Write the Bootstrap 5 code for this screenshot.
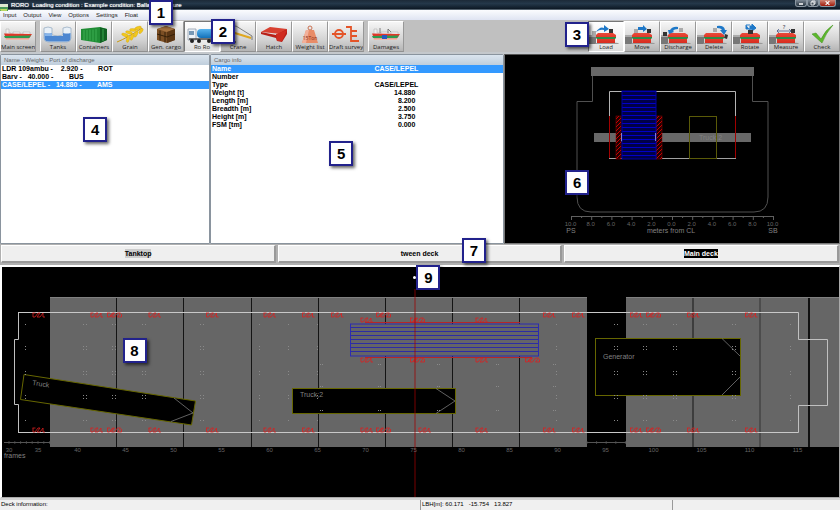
<!DOCTYPE html>
<html lang="en">
<head>
<meta charset="utf-8">
<meta name="viewport" content="width=device-width, initial-scale=1">
<title>RORO Loading condition</title>
<link href="https://cdn.jsdelivr.net/npm/bootstrap@5.3.0/dist/css/bootstrap.min.css" rel="stylesheet">
<style>
body{font-family:"Liberation Sans",Arial,sans-serif;font-size:7px;line-height:8px;background:#c0c0c0;color:#000}
.app-title{height:10px;font-size:6px;line-height:10px;color:#fff;background:linear-gradient(#1c2a38,#24384a 40%,#0c1824);border-bottom:1px solid #53616d}
.app-title svg{width:8px;height:8px}
.title-start{width:137px;padding-left:3px;text-shadow:0 0 1px #fff}
.title-end{margin-left:28px;text-shadow:0 0 1px #fff}
.win-btn{border:1px solid #8b97a2;border-top:0;border-radius:0 0 3px 3px;height:7px;width:12px;background:linear-gradient(#7a8692,#273440)}
.win-btn svg{display:block;width:100%;height:6px}
.win-close{width:17px;background:linear-gradient(#d08878,#a01808)}
.app-menu{height:10px;gap:7px;padding-left:3px;font-size:6px;line-height:10px;background:linear-gradient(#fbfcfe,#dfe4f2)}
.app-menu a{color:#222;text-decoration:none}
.toolbar{height:32px;padding-top:1px;background:#c0c0c0}
.tool{width:36px;height:31px;padding:1px 0 0;border:1px solid;border-color:#fff #989898 #909090 #fff;background:linear-gradient(#f6f6f6,#d4d4d4 60%,#b4b4b4);font-family:"Open Sans","Noto Sans",sans-serif;font-size:6px;line-height:7px;color:#1c1c1c;text-align:center;white-space:nowrap;overflow:hidden}
.tool svg{display:block;width:34px;height:20px}
.tool.on{background:linear-gradient(#fff,#eee 60%,#ddd);border-color:#777 #fff #fff #777}
.work{padding-top:2px;background:#c4c8cc}
.pane{background:#fff;border:1px solid #8a949e;border-radius:2px 2px 0 0}
.w-list{width:25%}.w-info{width:35%}.w-hull{width:40%}
.pane-head{height:10px;padding-left:3px;font-size:6px;line-height:10px;color:#666;background:linear-gradient(#dbe5ef,#bfcedc)}
.cargo-row{display:block;width:100%;border:0;padding:0 0 0 1px;background:none;text-align:left;white-space:pre;font-weight:700;line-height:8px}
.picked,.picked td,.picked th{background:#39f;color:#fff}
.facts{width:100%;font-weight:700}
.facts th{padding:0 0 0 1px;line-height:8px}
.facts td{padding:0 30% 0 0;text-align:right;line-height:8px}
.facts .name-cell{padding-right:29%}
.scene{display:block;width:100%;height:auto;background:#000}
.hull-pane{border:1px solid #777;border-top-color:#555;background:#000}
.decks{gap:2px;padding:1px 1px 2px;background:#b0b0b0}
.deck-btn{flex:1 1 0;height:18px;border:1px solid;border-width:1px 2px 2px 1px;border-color:#fff #999 #999 #fff;background:#efefef;padding:0;font-weight:700;line-height:8px;color:#000}
.deck-mid{flex-grow:1.03}
.deck-btn span{padding:1px 0}
.deck-btn .dim{background:#ccc}
.deck-btn .cur{background:#000;color:#fff}
.deck-pane{border:solid #fff;border-width:2px 1px 1px 2px;border-right-color:#aaa;border-bottom-color:#aaa}
.statusbar{font-size:6px;line-height:9px;background:#f0f0f0;border-top:2px solid #d4d4d4}
.statusbar div{padding-left:1px;height:10px;white-space:pre}
.statusbar div+div{border-left:1px solid #999}
.st-a{width:50%}.st-b{width:30%}.st-c{width:20%}
.callout{position:absolute;width:24px;height:25px;border:2px solid #22228c;background:#fff;box-shadow:2px 2px 3px rgba(0,0,0,.6);font-size:15px;line-height:21px;font-weight:700;text-align:center;color:#000;z-index:5}
.c1{left:149px;top:0}.c2{left:211px;top:19px}.c3{right:251px;top:22px}
.c4{left:39.5%;top:33%}.c5{left:40.5%;top:46%}.c6{left:18%;top:61%}
.c7{left:55%;top:-6px}.c8{left:14.4%;top:31%}.c9{left:49.5%;top:-2px}
.scene text{font-family:"Liberation Sans",Arial,sans-serif}
.t7{font-size:7px;fill:#808080}.t6{font-size:6px;fill:#666}
</style>
<script src="https://cdn.jsdelivr.net/npm/bootstrap@5.3.0/dist/js/bootstrap.bundle.min.js"></script>
</head>
<body class="position-relative">
<svg width="0" height="0" class="position-absolute" aria-hidden="true">
<defs>
<linearGradient id="gBlue" x1="0" y1="0" x2="0" y2="1"><stop offset="0" stop-color="#58b4ee"/><stop offset="1" stop-color="#1270b8"/></linearGradient>
<linearGradient id="gShip" x1="0" y1="0" x2="0" y2="1"><stop offset="0" stop-color="#e84a3a"/><stop offset=".4" stop-color="#e03828"/><stop offset=".45" stop-color="#2c8c48"/><stop offset=".6" stop-color="#2c8c48"/><stop offset=".65" stop-color="#e03828"/><stop offset="1" stop-color="#d82c20"/></linearGradient>
<symbol id="quay" viewBox="0 0 34 20"><path d="M0 11h7v9H0z" fill="#777"/><path d="M0 11h7v2H0z" fill="#aaa"/><ellipse cx="18" cy="19.500" rx="12" ry="1" fill="#999"/><path d="M9 9h15l3 2v3l-1 1v4H8v-4l-1-1v-3z" fill="url(#gShip)"/></symbol>
<symbol id="ship" viewBox="0 0 34 20"><path d="M5 11V5h3v4h2v2zM12 11V8h7v3zM22 11V8h7v3z" fill="#eee" stroke="#aaa" stroke-width=".5"/><path d="M3 9.500l28 .5-3 4.500H5z" fill="#e03828"/><path d="M3 12l27-.5-2 2.500H4z" fill="#2c9c50"/><path d="M4 14.500h24v1.500H5z" fill="#f0b8a8"/></symbol>
<pattern id="bluebars" width="4" height="4" patternUnits="userSpaceOnUse"><rect width="4" height="4" fill="#000048"/><rect width="4" height="1" y="3" fill="#0000c8"/></pattern>
<pattern id="redhatch" width="4" height="4" patternUnits="userSpaceOnUse"><rect width="4" height="4" fill="#200"/><path d="M-1 4L4-1M1 6L6 1" stroke="#c80000" stroke-width="1"/></pattern>
</defs>
</svg>

<header class="app-title d-flex align-items-start">
<svg viewBox="0 0 8 8" class="mt-1"><path d="M0 0h8v4H0z" fill="#dfe9d0"/><path d="M0 3h8v4H0z" fill="#4a9a58"/><path d="M0 5h7v2H1z" fill="#b8d860"/></svg>
<span class="title-start text-nowrap">RORO&nbsp; Loading condition : Example condition: Balla</span>
<span class="title-end flex-grow-1">ure</span>
<div class="d-flex pe-1">
<button class="win-btn p-0" type="button" aria-label="Minimize"><svg viewBox="0 0 10 6"><path d="M3 4h4" stroke="#fff" stroke-width="1.500"/></svg></button>
<button class="win-btn p-0" type="button" aria-label="Restore"><svg viewBox="0 0 10 6"><path d="M4 2V1h3v3H6M3 2h3v3H3z" stroke="#fff" fill="none" stroke-width=".8"/></svg></button>
<button class="win-btn win-close p-0" type="button" aria-label="Close"><svg viewBox="0 0 16 6"><path d="M6 1l4 4M10 1L6 5" stroke="#fff" stroke-width="1.200"/></svg></button>
</div>
</header>
<nav class="app-menu d-flex"><a href="#">Input</a><a href="#">Output</a><a href="#">View</a><a href="#">Options</a><a href="#">Settings</a><a href="#">Float</a></nav>

<div class="toolbar d-flex" role="toolbar" aria-label="Main tools">
<button class="tool" type="button"><svg viewBox="0 0 34 20"><use href="#ship"/></svg>Main screen</button>
<button class="tool ms-1" type="button"><svg viewBox="0 0 34 20"><path d="M3 4q4-2 8 0v7q6 2 11 0V4q4-2 8 0v10q0 4-4 4H7q-4 0-4-4z" fill="#e8f0f8" stroke="#8fa6bd" stroke-width=".7"/><path d="M3.500 9q4 1 7.500 0v3h11V9q4 1 7.500 0v5q0 3.500-4 3.500H8q-4.500 0-4.500-3.500z" fill="#4c86d0"/><path d="M4 9q4 2 7 0v3H4z" fill="#86b4ea"/></svg>Tanks</button>
<button class="tool" type="button"><svg viewBox="0 0 34 20"><path d="M4 5l19-2 7 2v11l-7 3-19-3z" fill="#1f8c34"/><path d="M23 3.500l7 1.500v11l-7 3z" fill="#116022"/><path d="M7 6v10M10 6v10.500M13 5.500v11M16 5.500v12M19 5v12.500M26 5v12" stroke="#45b85a" stroke-width=".8"/></svg>Containers</button>
<button class="tool" type="button"><svg viewBox="0 0 34 20"><path d="M4 18Q14 14 29 4" stroke="#c99a10" fill="none"/><g fill="#f2c81c" stroke="#c99a10" stroke-width=".3"><ellipse cx="12" cy="11" rx="3.500" ry="1.500" transform="rotate(20 12 11)"/><ellipse cx="16" cy="8.500" rx="3.500" ry="1.500" transform="rotate(15 16 8.500)"/><ellipse cx="20" cy="6" rx="3.500" ry="1.500" transform="rotate(5 20 6)"/><ellipse cx="25" cy="4" rx="3.500" ry="1.500" transform="rotate(-20 25 4)"/><ellipse cx="15" cy="15" rx="3.500" ry="1.500" transform="rotate(-75 15 15)"/><ellipse cx="19" cy="13" rx="3.500" ry="1.500" transform="rotate(-70 19 13)"/><ellipse cx="23" cy="10" rx="3.500" ry="1.500" transform="rotate(-65 23 10)"/><ellipse cx="28" cy="7" rx="3" ry="1.500" transform="rotate(-55 28 7)"/></g></svg>Grain</button>
<button class="tool" type="button"><svg viewBox="0 0 34 20"><path d="M8 5l9-3 9 3v11l-8 3-10-3z" fill="#7c4f24"/><path d="M8 5l9-3 9 3-8 3z" fill="#a87440"/><path d="M18 8l8-3v11l-8 3z" fill="#5a3614"/><path d="M11 6.500v10M16 8v10.500M8 10l10 3 8-3" stroke="#352008" fill="none"/></svg>Gen. cargo</button>
<button class="tool on" type="button"><svg viewBox="0 0 34 20"><path d="M3 5h8v11H3z" fill="#eef2f6" stroke="#8494a4" stroke-width=".7"/><path d="M4 7h5v4H4z" fill="#7898b4"/><rect x="12" y="5" width="20" height="9" rx="4" fill="url(#gBlue)"/><path d="M4 15h28" stroke="#444" stroke-width="1.500"/><g fill="#222"><circle cx="7" cy="17" r="2"/><circle cx="14" cy="17" r="2"/><circle cx="24" cy="17" r="2"/><circle cx="29" cy="17" r="2"/></g></svg>Ro Ro</button>
<button class="tool" type="button"><svg viewBox="0 0 34 20"><path d="M4 6L30 14" stroke="#e0a820" stroke-width="2"/><path d="M3 5l12-3 16 10v4" stroke="#555" fill="none" stroke-width=".7"/><path d="M10 8v9M7 18h8" stroke="#777" stroke-width="2"/></svg>Crane</button>
<button class="tool" type="button"><svg viewBox="0 0 34 20"><path d="M4 8l9-5 17 2-5 5z" fill="#d84030"/><path d="M4 8l15 3 11-6v5l-5 8-5-1-1-3-15-4z" fill="#b82018"/><path d="M19 10l11-4-5 11-5 0z" fill="#d02c20"/></svg>Hatch</button>
<button class="tool" type="button"><svg viewBox="0 0 34 20"><circle cx="17" cy="4" r="2" fill="none" stroke="#c87050"/><path d="M13 6h8l4 13H9z" fill="#e88c68"/><path d="M13 6h3l-3 13H9z" fill="#f2b09a"/><text x="17" y="16" font-size="5" text-anchor="middle" fill="#8c3018">15Ton</text></svg>Weight list</button>
<button class="tool" type="button"><svg viewBox="0 0 34 20"><g stroke="#e45428" fill="none" stroke-width="1.800"><circle cx="10" cy="10" r="4"/><path d="M3 10h14M17 3h5v14h8M22 7h6M22 12h6"/></g></svg>Draft survey</button>
<button class="tool ms-1" type="button"><svg viewBox="0 0 34 20"><use href="#ship"/><path d="M11 9V4M19 9V5l3 3" stroke="#666" fill="none" stroke-width=".8"/><path d="M13 11h5v4h-5z" fill="#2858c0"/></svg>Damages</button>
<div class="d-flex ms-auto">
<button class="tool on" type="button"><svg viewBox="0 0 34 20"><use href="#quay"/><path d="M7 8q4-6 8-4V1l5 4-5 3V6q-4-1-8 2z" fill="#1e78c8"/><path d="M3 7h4v4H3z" fill="#aaa"/><path d="M20 5h4v4h-4z" fill="#333"/></svg>Load</button>
<button class="tool" type="button"><svg viewBox="0 0 34 20"><use href="#quay"/><path d="M13 3h5V1l4 4-4 3V6h-5z" fill="#1e78c8"/><path d="M9 5h4v4H9z" fill="#aaa"/><path d="M22 5h4v4h-4z" fill="#333"/></svg>Move</button>
<button class="tool" type="button"><svg viewBox="0 0 34 20"><use href="#quay"/><path d="M17 3q-5-1-8 3H7l1 4 5-2-1-1q1-2 5-2z" fill="#1e78c8"/><path d="M2 8h4v4H2z" fill="#333"/><path d="M18 4h4v4h-4z" fill="#aaa"/></svg>Discharge</button>
<button class="tool" type="button"><svg viewBox="0 0 34 20"><use href="#quay"/><path d="M20 2q7-1 8 4h2l-3 5-4-5h2q-1-2-5-2z" fill="#1e78c8"/><path d="M16 4h4v4h-4z" fill="#aaa"/><path d="M28 10l3 1-1 4-3-1z" fill="#333"/></svg>Delete</button>
<button class="tool" type="button"><svg viewBox="0 0 34 20"><use href="#quay"/><path d="M13 1v4h6v2l4-3-4-4v2h-2v4M13 1h4" fill="#1e78c8" stroke="#1e78c8"/><path d="M15 6h5v4h-5z" fill="#333"/></svg>Rotate</button>
<button class="tool" type="button"><svg viewBox="0 0 34 20"><use href="#quay"/><path d="M8 7h14M10 5L8 7l2 2M20 5l2 2-2 2" stroke="#334a80" fill="none" stroke-width=".7"/><text x="15" y="5" font-size="6" text-anchor="middle" fill="#223">?</text><path d="M22 5h4v4h-4z" fill="#333"/></svg>Measure</button>
<button class="tool" type="button"><svg viewBox="0 0 34 20"><path d="M7 10l4-1 5 6Q21 5 28 1q-7 8-11 18z" fill="#5cb82c" stroke="#3c8c18" stroke-width=".5"/></svg>Check</button>
</div>
</div>

<main>
<div class="work d-flex">
<section class="pane w-list position-relative">
<div class="pane-head">Name - Weight - Port of discharge</div>
<button class="cargo-row" type="button">LDR 109ambu -    2.920 -        ROT</button>
<button class="cargo-row" type="button">Barv -   40.000 -        BUS</button>
<button class="cargo-row picked" type="button">CASE/LEPEL -   14.880 -        AMS</button>
<div class="callout c4">4</div>
</section>
<section class="pane w-info position-relative">
<div class="pane-head">Cargo info</div>
<table class="facts">
<tr class="picked"><th>Name</th><td class="name-cell">CASE/LEPEL</td></tr>
<tr><th>Number</th><td></td></tr>
<tr><th>Type</th><td class="name-cell">CASE/LEPEL</td></tr>
<tr><th>Weight [t]</th><td>14.880</td></tr>
<tr><th>Length [m]</th><td>8.200</td></tr>
<tr><th>Breadth [m]</th><td>2.500</td></tr>
<tr><th>Height [m]</th><td>3.750</td></tr>
<tr><th>FSM [tm]</th><td>0.000</td></tr>
</table>
<div class="callout c5">5</div>
</section>
<section class="hull-pane w-hull position-relative">
<svg class="scene" viewBox="505 55 334 188" role="img" aria-label="Cross section">
<path d="M592.500 76v25.500H577V197q0 15 14 15H754q14 0 14-15V101.500H752.500V76" fill="none" stroke="#505050"/>
<rect x="591" y="67" width="163" height="9" fill="#686868"/>
<rect x="594" y="133" width="157" height="9" fill="#686868"/>
<path d="M609.500 116V91.500H735.500V116" fill="none" stroke="#b4b4b4"/>
<path d="M609 158.500H736" stroke="#a0a0a0"/>
<path d="M609.500 116v42M735.500 116v42" stroke="#a00000"/>
<rect x="616" y="116" width="5" height="43" fill="url(#redhatch)" stroke="#900" stroke-width=".5"/>
<rect x="656" y="116" width="6" height="43" fill="url(#redhatch)" stroke="#900" stroke-width=".5"/>
<rect x="622" y="91" width="34" height="68" fill="url(#bluebars)" stroke="#0000a0"/>
<path d="M621.500 133v8M655.500 133v8" stroke="#8080d0"/>
<rect x="689.500" y="116.500" width="27" height="42" fill="none" stroke="#5a5a08"/>
<text x="699" y="140" class="t7">Truck 2</text>
<g id="clAxis"></g>
<text x="671" y="233" class="t7" text-anchor="middle">meters from CL</text>
<text x="571" y="233" class="t7" text-anchor="middle">PS</text>
<text x="773" y="233" class="t7" text-anchor="middle">SB</text>
</svg>
<div class="callout c6">6</div>
</section>
</div>

<div class="decks d-flex position-relative">
<button class="deck-btn" type="button"><span class="dim">Tanktop</span></button>
<button class="deck-btn deck-mid" type="button"><span>tween deck</span></button>
<button class="deck-btn" type="button"><span class="cur">Main deck</span></button>
<div class="callout c7">7</div>
</div>

<section class="deck-pane position-relative">
<svg class="scene" viewBox="2 267 837 230" role="img" aria-label="Main deck plan">
<rect x="50" y="297" width="537" height="150" fill="#666"/>
<rect x="626" y="297" width="213" height="150" fill="#666"/>
<path d="M50 297.500h537M626 297.500h213" stroke="#808080"/>
<path d="M116.500 298v149M183.500 298v149M251.500 298v149M318.500 298v149M385.500 298v149M452.500 298v149M519.500 298v149M693 298v149" stroke="#141414"/>
<path d="M760 298v149" stroke="#444" stroke-width="1.500"/><path d="M809 298v149" stroke="#111" stroke-width="2"/>
<g id="rail"></g>
<path d="M18.500 312.500V339.500H14.500V404.500H18.500V432.500M798.500 312.500V339.500H827.500V405.500H798.500V432.500" fill="none" stroke="#c0c0c0"/>
<path d="M18 312.500H798.500M18 432.500H798.500" stroke="#c8c8c8"/>
<g id="marks" fill="none" stroke="#dc2020" stroke-width=".8"></g>
<path d="M365 322.500H520M365 357.500H532" stroke="#b42828"/>
<rect x="350.500" y="324" width="188" height="32" fill="#646468" stroke="#2c2cb0"/>
<path d="M351 327.500h187M351 331.500h187M351 335.500h187M351 339.500h187M351 343.500h187M351 347.500h187M351 351.500h187" stroke="#2c2ca4"/>
<g stroke="#666600">
<path d="M24 374.500L195.500 401L191.500 425L20.500 399.500Z"/>
<rect x="292.500" y="388.500" width="163" height="25"/>
<rect x="595.500" y="338.500" width="145" height="57"/>
</g>
<path d="M174 398L193 413L171 421.500M436 388.500L455 401L436 413.500M722 338.500L740 356M740 377L722 395" fill="none" stroke="#787878" stroke-width=".8"/>
<g id="lashings" fill="#8a8a8a"></g>
<text class="t7" x="32" y="385" transform="rotate(8 32 385)">Truck</text>
<text class="t7" x="300" y="397">Truck;2</text>
<text class="t7" x="603" y="359">Generator</text>
<path d="M415 289V497" stroke="#a00000" stroke-opacity=".5" stroke-width="1.500"/>
<circle cx="414.500" cy="277.500" r="1.500" fill="#fff"/>
<g id="frameAxis"></g>
<text class="t7" x="4" y="458">frames</text>
</svg>
<div class="callout c8">8</div>
<div class="callout c9">9</div>
</section>
</main>
<footer class="statusbar d-flex"><div class="st-a">Deck information:</div><div class="st-b">LBH[m]: 60.171   -15.754   13.827</div><div class="st-c"></div></footer>
<div class="callout c1">1</div><div class="callout c2">2</div><div class="callout c3">3</div>

<script>
const put = (id, html) => { document.getElementById(id).innerHTML = html; };
// Transverse scale, metres either side of the centre line
let cl = '<path d="M571.5 216.5H774" stroke="#606060"/>';
for (let i = 0; i <= 20; i++) cl += `<path d="M${571.5 + i * 10.1} 216v${i % 2 ? 2 : 4}" stroke="#606060"/>`;
for (let i = 0; i <= 10; i++) cl += `<text class="t6" x="${570.5 + i * 20.2}" y="226" text-anchor="middle">${Math.abs(10 - 2 * i).toFixed(1)}</text>`;
put('clAxis', cl);
// Frame numbers along the deck
const frames = {30: 9, 35: 38};
for (let f = 40; f <= 115; f += 5) frames[f] = 77.5 + (f - 40) * 9.6;
put('frameAxis', Object.entries(frames).map(([f, x]) => `<text class="t6" x="${x}" y="452" text-anchor="middle">${f}</text>`).join(''));
let rail = '<path d="M4 442.5H50M587 442.5h39" stroke="#555"/>';
for (let x = 9; x < 50; x += 5.8) rail += `<path d="M${x} 441v3" stroke="#555" stroke-width=".7"/>`;
for (let x = 587; x < 627; x += 9.6) rail += `<path d="M${x} 441v3" stroke="#555" stroke-width=".7"/>`;
put('rail', rail);
// Container position marks: centre x, top y, wide or narrow
const mark = (x, y, wide) => wide
  ? `<path d="M${x - 8} ${y}h3M${x - 7.5} ${y}v4h2l3-4h2l-3 4h3l3-4h3l-3 4h4v-3M${x - 5} ${y + 4}l3-4"/>`
  : `<path d="M${x - 5} ${y}h3M${x - 4.5} ${y}v4h2l3-4h2l-3 4h3l3-4v4h2"/>`;
const narrow = [37.5, 95.5, 153.5, 211, 268.5, 307, 548, 577, 635, 692, 750];
let marks = '';
for (const x of [...narrow, 336]) marks += mark(x, 313, false);
for (const x of [...narrow, 365.5, 423.5, 480.5]) marks += mark(x, 428, false);
for (const x of [115, 384, 654]) marks += mark(x, 313, true) + mark(x, 428, true);
for (const y of [318, 358]) marks += mark(365.5, y, false) + mark(418, y, true) + mark(480.5, y, false);
marks += mark(533, 358, true);
put('marks', marks);
// Lashing points
const dot = (x, y) => `<rect x="${x}" y="${y}" width="1" height="1"/>`;
let pts = '';
for (const x of [26, 84, 113, 143, 201, 260, 289, 318, 557, 615, 644, 674, 733, 791])
  for (const y of [324, 346, 371, 395, 420]) {
    const single = [26, 260, 289, 318, 557, 791].includes(x);
    pts += dot(x - 1, y) + (single ? '' : dot(x + 2, y));
    if (y > 324 && y < 420) pts += dot(x - 1, y + 3) + (single ? '' : dot(x + 2, y + 3));
  }
for (const x of [321, 379, 438, 497, 554]) for (const y of [364, 386, 410]) pts += dot(x - 1, y) + dot(x + 1, y);
put('lashings', pts);
</script>
</body>
</html>
